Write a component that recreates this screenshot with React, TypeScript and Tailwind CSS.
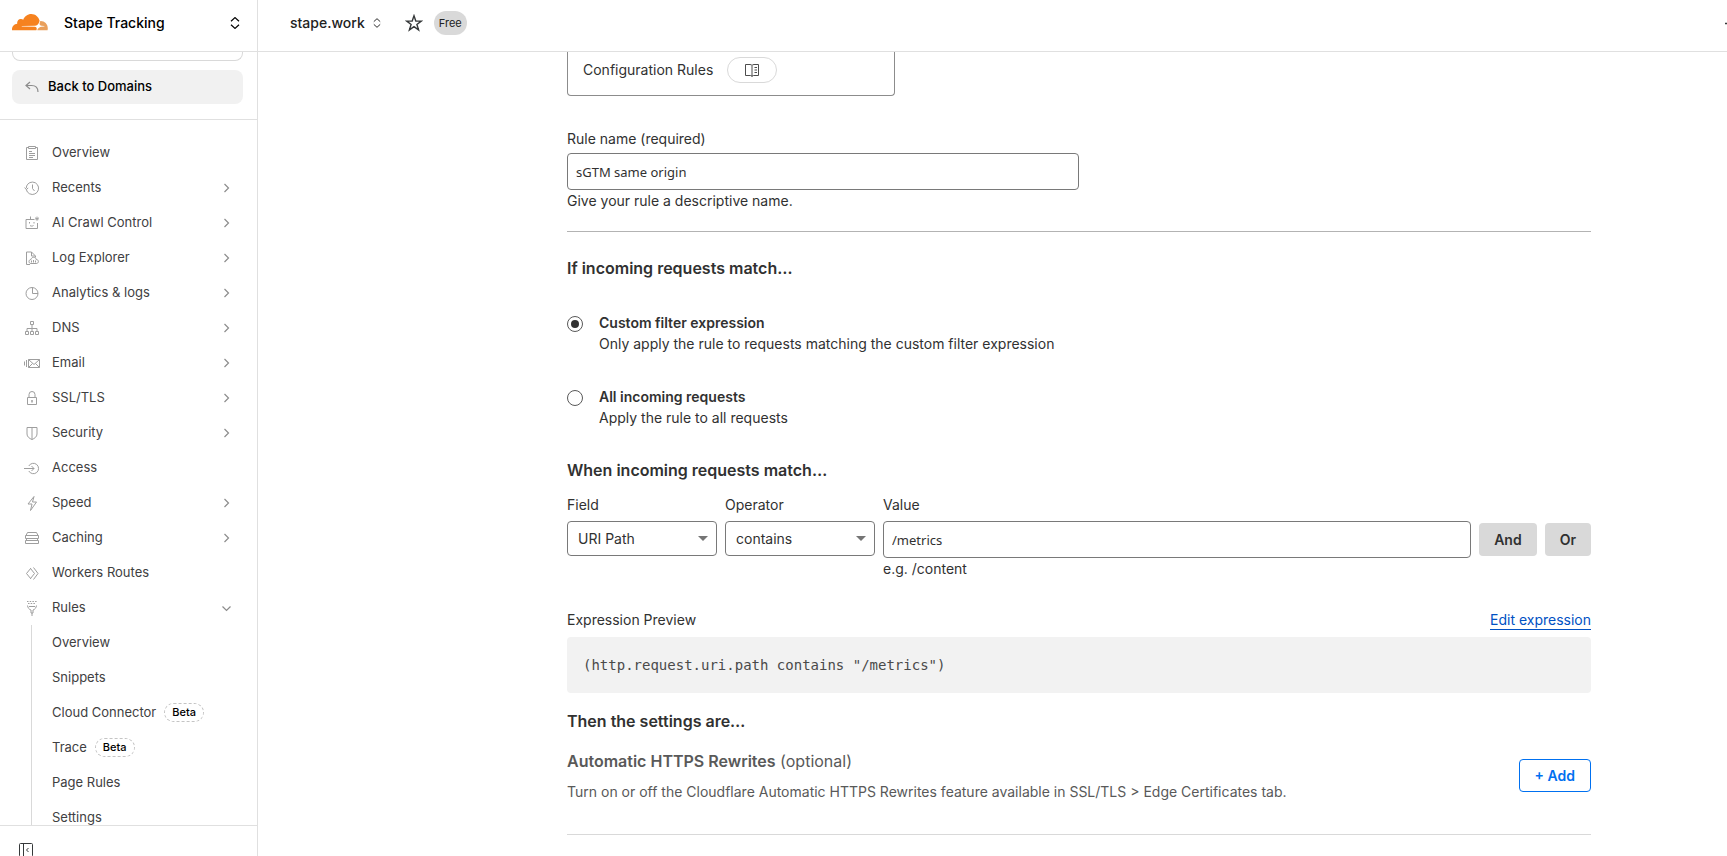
import React, { useState } from 'react';

type IconName =
  | 'overview'
  | 'recents'
  | 'ai'
  | 'log'
  | 'analytics'
  | 'dns'
  | 'email'
  | 'ssl'
  | 'security'
  | 'access'
  | 'speed'
  | 'caching'
  | 'workers'
  | 'rules';

interface NavItem {
  label: string;
  icon: IconName;
  arrow?: 'right' | 'down';
}

const navItems: NavItem[] = [
  { label: 'Overview', icon: 'overview' },
  { label: 'Recents', icon: 'recents', arrow: 'right' },
  { label: 'AI Crawl Control', icon: 'ai', arrow: 'right' },
  { label: 'Log Explorer', icon: 'log', arrow: 'right' },
  { label: 'Analytics & logs', icon: 'analytics', arrow: 'right' },
  { label: 'DNS', icon: 'dns', arrow: 'right' },
  { label: 'Email', icon: 'email', arrow: 'right' },
  { label: 'SSL/TLS', icon: 'ssl', arrow: 'right' },
  { label: 'Security', icon: 'security', arrow: 'right' },
  { label: 'Access', icon: 'access' },
  { label: 'Speed', icon: 'speed', arrow: 'right' },
  { label: 'Caching', icon: 'caching', arrow: 'right' },
  { label: 'Workers Routes', icon: 'workers' },
  { label: 'Rules', icon: 'rules', arrow: 'down' },
];

const ruleItems = [
  { label: 'Overview' },
  { label: 'Snippets' },
  { label: 'Cloud Connector', beta: true },
  { label: 'Trace', beta: true },
  { label: 'Page Rules' },
  { label: 'Settings' },
];

const iconShapes: Record<IconName, React.ReactNode> = {
  overview: (
    <>
      <path d="M4.5 2.5h-2v12h11v-12h-2" />
      <path d="M4.5 1.5h7v2h-7zM5 6.5h3M5 8.5h6M5 10.5h6M5 12.5h4" />
    </>
  ),
  recents: (
    <>
      <path d="M2.3 9.500A6.200 6.200 0 1 0 3.700 4.200 6 6 0 0 0 2.300 8" />
      <path d="M.6 7.600l1.700 1.900 1.900-1.500M8.500 4.500v4l2 2.500" />
    </>
  ),
  ai: (
    <>
      <path d="M10.500 4.500h-8.500v9h11.500v-5.500M6.500 4.500v-3" />
      <path d="M5.500 7v1.500M10 7v1.500M6 10.500c1 .8 2.500.8 3.500 0" />
      <path d="M13 1.500v4.500M11 3.700h4M11.600 2.300l2.800 2.800M14.400 2.300l-2.800 2.800" strokeWidth=".8" />
    </>
  ),
  log: (
    <>
      <path d="M6 14.500H2.500v-12.500h5l4 4v1.500M7.500 2v4h3.500" />
      <path d="M7 13.500c-1.300 0-2-.9-2-2s.9-2 2-2c.3-1.400 1.300-2.200 2.600-2.200 1.500 0 2.400.9 2.600 2.200 1.300 0 2.200.8 2.200 2s-.9 2-2.200 2z" />
      <path d="M7.500 10.500v2M9.500 10v2.500M11.500 10.500v2" />
    </>
  ),
  analytics: (
    <>
      <circle cx="8" cy="8.500" r="6" />
      <path d="M8.500 2.500v6H14" />
    </>
  ),
  dns: (
    <>
      <path d="M6.500 1.500h3v3h-3zM1.500 11.500h3v3h-3zM6.500 11.500h3v3h-3zM11.500 11.500h3v3h-3z" />
      <path d="M8 4.500v7M3 11.500v-3h10v3" />
    </>
  ),
  email: (
    <>
      <path d="M4.500 4.500h11v8h-11z" />
      <path d="M4.500 4.500l5.500 5 5.500-5M4.500 12.500l4-4M15.500 12.500l-4-4M2.500 5v7M.5 6.500v4" />
    </>
  ),
  ssl: (
    <>
      <path d="M3.500 7.500h9v7h-9zM5 7.500v-3a3 3 0 0 1 6 0v3" />
      <path d="M8 10v2.500" strokeWidth="1.500" />
    </>
  ),
  security: (
    <path d="M3 2.500h10v6.500c0 2.800-2.500 4.500-5 5.500-2.500-1-5-2.700-5-5.500zM8 2.500v12" />
  ),
  access: (
    <>
      <path d="M4.800 6A5.200 5.200 0 1 1 4.800 11" />
      <path d="M0 8.500h10M7.500 6l2.500 2.500L7.500 11" />
    </>
  ),
  speed: <path d="M10 1.500l-6 7.500h4l-1.500 6.500 6-8.500h-4z" />,
  caching: (
    <>
      <path d="M2 5.500l1.500-3h9l1.500 3" />
      <path d="M1.500 5.500h13v3h-13zM2.500 8.500v2M13.500 8.500v2M1.500 10.500h13v3h-13z" />
    </>
  ),
  workers: (
    <>
      <path d="M7 3l-4.500 5.500L7 14M6.500 3.500l4 5-4 5" />
      <path d="M9.500 2.500l4.500 6-4.500 6" />
    </>
  ),
  rules: (
    <>
      <path d="M3 1.500h10M4 3.500h8" strokeDasharray="1.500 1.200" />
      <path d="M3.500 5.500c.3 2.200 1.500 4 3.500 4.500v3h2v-3c2-.5 3.200-2.300 3.500-4.500M5 6.500h6M8 13v3" />
    </>
  ),
};

function NavIcon({ name }: { name: IconName }) {
  return (
    <svg viewBox="0 0 16 16" className="size-4 shrink-0" fill="none" stroke="#9e9e9e" strokeWidth="1" aria-hidden="true">
      {iconShapes[name]}
    </svg>
  );
}

function Arrow({ direction }: { direction: 'right' | 'down' }) {
  return (
    <svg viewBox="0 0 16 16" className="size-4 shrink-0" fill="none" stroke="#8c8c8c" strokeWidth="1.200" aria-hidden="true">
      {direction === 'right' ? <path d="M5.500 4l4 4-4 4" /> : <path d="M3.500 6.500l4 4 4-4" />}
    </svg>
  );
}

function UpDown({ className }: { className: string }) {
  return (
    <svg viewBox="0 0 10 12" className={className} fill="none" stroke="currentColor" strokeWidth="1.200" aria-hidden="true">
      <path d="M1 4.300l4-3.700 4 3.700M1 7.700l4 3.700 4-3.700" />
    </svg>
  );
}

function CloudLogo() {
  return (
    <svg viewBox="0 0 66 30" className="w-9 shrink-0" role="img" aria-label="Cloudflare">
      <path
        fill="#e9a05c"
        d="M52.688 13.028c-.22 0-.437.008-.654.015a.297.297 0 0 0-.102.024.365.365 0 0 0-.236.255l-.93 3.249c-.401 1.397-.252 2.687.422 3.634.618.876 1.646 1.39 2.894 1.45l5.045.306a.45.45 0 0 1 .435.41.5.5 0 0 1-.025.223.64.64 0 0 1-.547.426l-5.242.306c-2.848.132-5.912 2.456-6.987 5.29l-.378 1a.28.28 0 0 0 .248.382h18.054a.48.48 0 0 0 .464-.35c.32-1.153.482-2.344.48-3.54 0-7.22-5.79-13.072-12.933-13.072"
      />
      <path
        fill="#f6821f"
        d="M44.807 29.578l.334-1.175c.402-1.397.253-2.687-.42-3.634-.62-.876-1.647-1.39-2.896-1.45l-23.665-.306a.467.467 0 0 1-.374-.199.5.5 0 0 1-.052-.434.64.64 0 0 1 .552-.426l23.886-.306c2.836-.131 5.9-2.456 6.975-5.29l1.362-3.6a.914.914 0 0 0 .04-.477C48.997 5.259 42.789 0 35.367 0c-6.842 0-12.647 4.462-14.73 10.665a6.92 6.92 0 0 0-4.911-1.374c-3.28.33-5.92 3.002-6.246 6.318a7.148 7.148 0 0 0 .18 2.472C4.3 18.241 0 22.679 0 28.133c0 .493.035.985.106 1.474a.46.46 0 0 0 .457.402h43.704a.57.57 0 0 0 .54-.418"
      />
    </svg>
  );
}

function Sidebar() {
  return (
    <aside className="flex w-[258px] shrink-0 flex-col border-r border-[#e0e0e0]">
      <button className="flex h-[52px] shrink-0 items-center border-b border-[#e0e0e0] pr-[17px] pb-[6px] pl-3 text-left text-sm font-medium text-black">
        <CloudLogo />
        <span className="ml-4 flex-1">Stape Tracking</span>
        <UpDown className="h-3 w-[10px]" />
      </button>

      <div className="shrink-0 border-b border-[#e0e0e0] px-3 pr-[14px] pb-[15px]">
        <div className="h-[9px] rounded-b-lg border border-t-0 border-[#d9d9d9]" />
        <a href="#domains" className="mt-[9px] flex h-[34px] items-center gap-2 rounded-lg bg-[#f1f1f1] pl-3 text-[13px] font-medium text-black">
          <svg viewBox="0 0 16 16" className="size-4" fill="none" stroke="#8c8c8c" strokeWidth="1.200" aria-hidden="true">
            <path d="M6 3L2 6.500 6 10M2 6.500h5.500c4.500 0 6.500 2.500 6.500 6.500" />
          </svg>
          Back to Domains
        </a>
      </div>

      <nav className="min-h-0 flex-1 overflow-hidden pt-[15px] text-[13px] text-[#404041]">
        <ul>
          {navItems.map((item) => (
            <li key={item.label}>
              <a href="#nav" className="flex h-[35px] items-center gap-3 pr-[22px] pl-6">
                <NavIcon name={item.icon} />
                <span className="flex-1">{item.label}</span>
                {item.arrow && <Arrow direction={item.arrow} />}
              </a>
            </li>
          ))}
        </ul>
        <ul className="ml-[31px] border-l border-[#d9d9d9]">
          {ruleItems.map((item) => (
            <li key={item.label}>
              <a href="#rules" className="flex h-[35px] items-center gap-2 pl-5">
                {item.label}
                {item.beta && (
                  <span className="rounded-full border border-dashed border-[#c4c4c4] px-[7px] text-[11px] leading-[17px] font-medium text-black">
                    Beta
                  </span>
                )}
              </a>
            </li>
          ))}
        </ul>
      </nav>

      <div className="h-[31px] shrink-0 overflow-hidden border-t border-[#e0e0e0] pt-4 pl-[18px]">
        <button aria-label="Collapse sidebar" className="block">
          <svg viewBox="0 0 16 16" className="size-4" fill="none" stroke="#36393a" aria-hidden="true">
            <rect x="1.500" y="1.500" width="13" height="13" rx="1" />
            <path d="M5.500 1.500v13M10.500 6L8.500 8l2 2" />
          </svg>
        </button>
      </div>
    </aside>
  );
}

function Header() {
  return (
    <header className="flex h-[52px] shrink-0 items-center overflow-hidden border-b border-[#e0e0e0] pb-[6px] pl-8">
      <button className="flex items-center gap-2 text-sm font-medium text-[#222]">
        stape.work
        <UpDown className="h-3 w-2" />
      </button>
      <button aria-label="Add to favourites" className="ml-6">
        <svg viewBox="0 0 18 18" className="block size-[18px]" fill="none" stroke="#36393a" strokeWidth="1.400" aria-hidden="true">
          <path d="M9 1.800l1.800 5.300h5.500l-4.400 3.300 1.700 5.500L9 12.600l-4.600 3.300 1.700-5.500-4.400-3.300h5.500z" />
        </svg>
      </button>
      <span className="ml-[11px] rounded-full bg-[#d9d9d9] px-[5px] text-[11px] leading-6 text-[#222]">Free</span>
      <button aria-label="Add" className="-mr-3 ml-auto">
        <svg viewBox="0 0 14 14" className="block size-[14px]" stroke="#36393a" strokeWidth="1.500" aria-hidden="true">
          <path d="M0 7.500h14M7 .5v14" />
        </svg>
      </button>
    </header>
  );
}

interface SelectFieldProps {
  id: string;
  label: string;
  options: string[];
}

function SelectField({ id, label, options }: SelectFieldProps) {
  return (
    <div className="w-[150px] shrink-0">
      <label htmlFor={id} className="mb-[6px] block">{label}</label>
      <div className="relative">
        <select id={id} className="block h-[35px] w-full appearance-none rounded border border-[#797979] bg-white pl-[10px]">
          {options.map((option) => (
            <option key={option}>{option}</option>
          ))}
        </select>
        <svg viewBox="0 0 10 5" className="pointer-events-none absolute top-[15px] right-[9px] h-[5px] w-[10px]" fill="#757575" aria-hidden="true">
          <path d="M0 0h10L5 5z" />
        </svg>
      </div>
    </div>
  );
}

interface MatchOptionProps {
  id: string;
  title: string;
  description: string;
  checked: boolean;
  onSelect: () => void;
}

function MatchOption({ id, title, description, checked, onSelect }: MatchOptionProps) {
  return (
    <div className="flex gap-4">
      <input
        type="radio"
        id={id}
        name="match"
        checked={checked}
        onChange={onSelect}
        className="mt-1 grid size-4 shrink-0 appearance-none place-items-center rounded-full border border-[#595959] before:size-2 before:rounded-full checked:before:bg-[#313131]"
      />
      <label htmlFor={id} className="leading-[21px]">
        <span className="block font-semibold">{title}</span>
        <span className="block">{description}</span>
      </label>
    </div>
  );
}

export default function App() {
  const [ruleName, setRuleName] = useState('sGTM same origin');
  const [match, setMatch] = useState('custom');
  const [value, setValue] = useState('/metrics');

  return (
    <div className="flex h-screen overflow-hidden bg-white font-['Inter',sans-serif]">
      <Sidebar />

      <div className="flex min-w-0 flex-1 flex-col">
        <Header />

        <main className="min-h-0 flex-1 overflow-hidden pr-[136px] pl-[309px] text-sm text-[#313131]">
          <div className="flex h-11 w-[328px] items-start gap-[14px] rounded-b border border-t-0 border-[#8c8c8c] pt-[5px] pl-[15px]">
            <span className="leading-[26px]">Configuration Rules</span>
            <button aria-label="Documentation" className="flex h-[26px] w-[50px] items-center justify-center rounded-full border border-[#d9d9d9]">
              <svg viewBox="0 0 16 16" className="size-4" fill="none" stroke="#4d4d4d" aria-hidden="true">
                <path d="M8 3.500c-.5-.7-1-1-2-1H1.500v11H6.500c1 0 1.500.4 1.500 1 0-.6.500-1 1.500-1h5v-11H10c-1 0-1.500.3-2 1zM8 3.500v11" />
                <path d="M10.500 5.500h2.500M10.500 8h2.500M10.500 10.500h2.500" />
              </svg>
            </button>
          </div>

          {/* Rule name */}
          <div className="mt-[33px] w-1/2">
            <label htmlFor="rule-name" className="mb-1 block">Rule name (required)</label>
            <input
              id="rule-name"
              value={ruleName}
              onChange={(e) => setRuleName(e.target.value)}
              className="block h-[37px] w-full rounded border border-[#797979] px-2 font-['Noto_Sans',sans-serif] text-[13px]"
            />
            <p className="mt-px">Give your rule a descriptive name.</p>
          </div>

          <hr className="mt-5 border-[#b3b3b3]" />

          <h2 className="mt-6 text-base font-semibold">If incoming requests match…</h2>
          <div className="mt-8 flex flex-col gap-8">
            <MatchOption
              id="match-custom"
              title="Custom filter expression"
              description="Only apply the rule to requests matching the custom filter expression"
              checked={match === 'custom'}
              onSelect={() => setMatch('custom')}
            />
            <MatchOption
              id="match-all"
              title="All incoming requests"
              description="Apply the rule to all requests"
              checked={match === 'all'}
              onSelect={() => setMatch('all')}
            />
          </div>

          {/* Expression builder */}
          <h2 className="mt-[30px] text-base font-semibold">When incoming requests match…</h2>
          <div className="mt-[13px] flex gap-2">
            <SelectField id="field" label="Field" options={['URI Path', 'URI', 'Hostname']} />
            <SelectField id="operator" label="Operator" options={['contains', 'equals', 'starts with']} />
            <div className="min-w-0 flex-1">
              <label htmlFor="value" className="mb-[6px] block">Value</label>
              <input
                id="value"
                value={value}
                onChange={(e) => setValue(e.target.value)}
                className="block h-[37px] w-full rounded border border-[#797979] px-2 font-['Noto_Sans',sans-serif] text-[13px]"
              />
              <p className="mt-px">e.g. /content</p>
            </div>
            <div className="flex items-start gap-2 pt-7 font-semibold">
              <button className="h-[33px] rounded bg-[#d9d9d9] px-[15px]">And</button>
              <button className="h-[33px] rounded bg-[#d9d9d9] px-[15px]">Or</button>
            </div>
          </div>

          <div className="mt-[31px] flex items-start justify-between">
            <span>Expression Preview</span>
            <a href="#edit" className="border-b border-[#0051c3] leading-[19px] text-[#0051c3]">Edit expression</a>
          </div>
          <pre className="mt-[7px] rounded bg-[#f2f2f2] px-4 py-[18px] font-['DejaVu_Sans_Mono',monospace] text-sm text-[#4a4a4a]">
            (http.request.uri.path contains "{value}")
          </pre>

          {/* Settings */}
          <h2 className="mt-4 text-base font-semibold">Then the settings are…</h2>
          <section className="mt-4 flex items-start justify-between border-b border-[#d9d9d9] pb-8 text-[#595959]">
            <div>
              <h3 className="text-base">
                <span className="font-semibold">Automatic HTTPS Rewrites</span> (optional)
              </h3>
              <p className="mt-[9px]">
                Turn on or off the Cloudflare Automatic HTTPS Rewrites feature available in SSL/TLS &gt; Edge Certificates tab.
              </p>
            </div>
            <button className="mt-[10px] h-[33px] rounded border border-[#0070f0] px-[15px] font-semibold text-[#0070f0]">+ Add</button>
          </section>
        </main>
      </div>
    </div>
  );
}
